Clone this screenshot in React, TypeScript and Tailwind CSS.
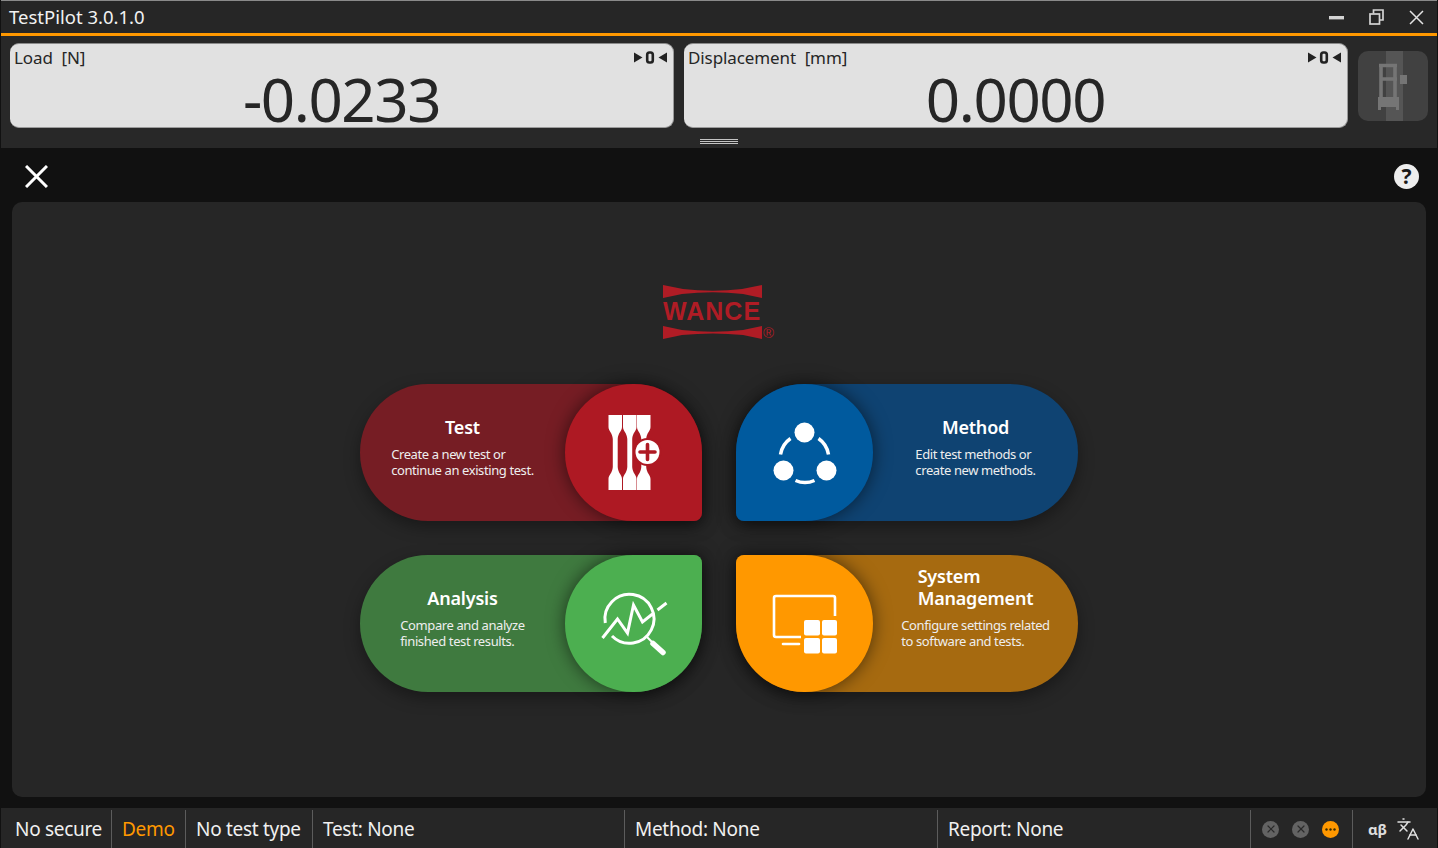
import type { ReactNode } from 'react';
import { Languages, X } from 'lucide-react';

const ZeroMark = () => (
  <svg width="33" height="13" viewBox="0 0 33 13">
    <path d="M0 1.5 L8.5 6.5 L0 11.5 Z" fill="#222" />
    <rect x="13.2" y="1.5" width="5.6" height="10" rx="2.2" fill="none" stroke="#222" strokeWidth="2.6" />
    <path d="M33 1.5 L24.5 6.5 L33 11.5 Z" fill="#222" />
  </svg>
);

const Gauge = ({ label, value }: { label: string; value: string }) => (
  <div className="flex-1 h-[85px] rounded-[9px] bg-[#e1e1e1] border border-[#9a9a9a] border-l-0 border-t-[#8a8a8a] pl-[4px] text-[#262626]">
    <div className="flex items-start justify-between pr-[6px] pt-[2px]">
      <span className="text-[17px] leading-[24px] tracking-[-0.1px] whitespace-pre">{label}</span>
      <span className="pt-[5px]">
        <ZeroMark />
      </span>
    </div>
    <div className="text-center text-[60px] leading-[60px] tracking-[-1.4px] mt-[-1px] pr-[4px]">{value}</div>
  </div>
);

const MachineIcon = () => (
  <div className="w-[70px] h-[70px] rounded-[10px] bg-[#414141] overflow-hidden">
    <svg width="70" height="70" viewBox="0 0 70 70">
      <rect x="28" y="0" width="17" height="70" fill="#555" />
      <path d="M23 13 V46 M37 13 V46 M21 14.5 H39 M22 28 H39" stroke="#757575" strokeWidth="3.6" fill="none" />
      <rect x="20" y="46" width="21" height="10" fill="#757575" />
      <rect x="20" y="56" width="3" height="3" fill="#757575" />
      <rect x="38" y="56" width="3" height="3" fill="#757575" />
      <rect x="42" y="24" width="7" height="9" fill="#757575" />
    </svg>
  </div>
);

const Bone = ({ x }: { x: number }) => (
  <path
    transform={`translate(${x} 0)`}
    d="M0 0 H13.5 V12 C13.5 16 9.5 18 9.2 24 V52 C9.5 58 13.5 60 13.5 64 V75 H0 V64 C0 60 4 58 4.3 52 V24 C4 18 0 16 0 12 Z"
    fill="#fff"
  />
);

const TestIcon = () => (
  <svg width="56" height="76" viewBox="0 0 56 76">
    <Bone x={2.5} />
    <Bone x={17} />
    <Bone x={31} />
    <circle cx="41.5" cy="37" r="14" fill="#ae1923" />
    <circle cx="41.5" cy="37" r="12" fill="#fff" />
    <path d="M41.5 29.5 V44.5 M34 37 H49" stroke="#ae1923" strokeWidth="3.6" strokeLinecap="round" />
  </svg>
);

const MethodIcon = () => (
  <svg width="66" height="66" viewBox="0 0 66 66" fill="none" className="overflow-visible">
    <circle cx="32.5" cy="12.5" r="10" fill="#fff" />
    <circle cx="11.5" cy="50.5" r="10" fill="#fff" />
    <circle cx="54.5" cy="50.5" r="10" fill="#fff" />
    <path d="M8.5 34.5 A24 24 0 0 1 18.5 18.5" stroke="#fff" strokeWidth="3.5" />
    <path d="M46.5 18.5 A24 24 0 0 1 56.5 34.5" stroke="#fff" strokeWidth="3.5" />
    <path d="M23.5 60.5 A24 24 0 0 0 42.5 60.5" stroke="#fff" strokeWidth="3.5" />
  </svg>
);

const AnalysisIcon = () => (
  <svg width="68" height="64" viewBox="0 0 68 64" fill="none" stroke="#fff" className="overflow-visible">
    <path d="M5.3 31 A24.5 24.5 0 1 1 12 44" strokeWidth="3" />
    <path d="M2.5 46 L17.5 27 L27.5 41 L33.5 13 L42.5 30 L52.5 22" strokeWidth="3" />
    <path d="M57.5 18 L66.5 11" strokeWidth="3" />
    <path d="M47 45 L52 50" strokeWidth="2" />
    <path d="M53 51.5 L63 60.5" strokeWidth="5.5" strokeLinecap="round" />
  </svg>
);

const SystemIcon = () => (
  <svg width="66" height="60" viewBox="0 0 66 60" fill="none">
    <path d="M63 22 V4 Q63 2 61 2 H4 Q2 2 2 4 V41 Q2 43 4 43 H29" stroke="#fff" strokeWidth="2.6" />
    <path d="M11 50 H27" stroke="#fff" strokeWidth="2.6" strokeLinecap="round" />
    <rect x="32" y="26" width="16" height="15.5" rx="2" fill="#fff" />
    <rect x="50" y="26" width="15" height="15.5" rx="2" fill="#fff" />
    <rect x="32" y="44" width="16" height="15.5" rx="2" fill="#fff" />
    <rect x="50" y="44" width="15" height="15.5" rx="2" fill="#fff" />
  </svg>
);

type CardProps = {
  title: ReactNode;
  lines: string[];
  outer: string;
  circle: string;
  icon: ReactNode;
};

const Card = ({ title, lines, outer, circle, icon }: CardProps) => (
  <div className={`flex items-stretch h-[137px] w-[342px] shadow-[0_6px_16px_rgba(0,0,0,0.35)] ${outer}`}>
    <div className="flex-1 flex flex-col items-center justify-end pb-[43px]">
      <div className="text-white">
        <div className="flex justify-center text-[18px] leading-[22px] font-semibold tracking-[-0.2px]">
          <div>{title}</div>
        </div>
        <div className="mt-[9px] text-[13px] leading-[15.5px] text-[#eeeeee] tracking-[-0.4px]">
          {lines.map((line) => (
            <div key={line}>{line}</div>
          ))}
        </div>
      </div>
    </div>
    <div className={`w-[137px] flex items-center justify-center shadow-[0_0_18px_rgba(0,0,0,0.55)] ${circle}`}>{icon}</div>
  </div>
);

const Logo = () => (
  <div className="relative w-[99px] flex flex-col mt-[83px] mr-[13px]">
    <svg width="99" height="13" viewBox="0 0 99 13" className="block">
      <path d="M0 0 L20 4 Q50 7.5 79 4 L99 0 V13 L80 9 Q50 5.5 19 9 L0 13 Z" fill="#b01c25" />
    </svg>
    <div className="text-[#b01c25] font-['Liberation_Sans',sans-serif] font-bold text-[25px] leading-[26px] mb-[2px] tracking-[1px] whitespace-nowrap">WANCE</div>
    <svg width="99" height="13" viewBox="0 0 99 13" className="block">
      <path d="M0 0 L19 4 Q50 7.5 80 4 L99 0 V13 L80 9 Q50 6 19 9 L0 13 Z" fill="#b01c25" />
    </svg>
    <span className="absolute left-[100px] top-[40px] font-['Liberation_Sans',sans-serif] text-[15px] leading-[15px] text-[#b01c25]">®</span>
  </div>
);

const StatusCell = ({ width, children, className }: { width: string; children: ReactNode; className?: string }) => (
  <div className={`${width} h-[38px] mt-[2px] shrink-0 flex items-center pl-[10px] border-r border-[#5c5c5c] ${className ?? ''}`}>{children}</div>
);

const StatusDot = () => (
  <span className="w-[17px] h-[17px] rounded-full bg-[#636363] flex items-center justify-center">
    <X size={12} strokeWidth={2.4} color="#2a2a2a" />
  </span>
);

export default function App() {
  return (
    <div className="h-[848px] w-full overflow-hidden flex flex-col bg-[#111111] font-['Noto_Sans',sans-serif] text-white border-x border-[#111111]">
      <header className="h-[33px] bg-[#262626] border-t border-[#8a8a8a] flex items-center justify-between pl-[8px] pr-[13px]">
        <span className="text-[18.5px] leading-[32px] text-[#f2f2f2]">TestPilot 3.0.1.0</span>
        <div className="flex items-center gap-[25px]">
          <svg width="15" height="15" viewBox="0 0 15 15">
            <rect x="0" y="6" width="15" height="3.4" fill="#d4d4d4" />
          </svg>
          <svg width="15" height="16" viewBox="0 0 15 16" fill="none" stroke="#d4d4d4" strokeWidth="1.7">
            <rect x="1" y="5" width="9.5" height="10" />
            <path d="M4.5 4.5 V1 H14 V11 H11" />
          </svg>
          <svg width="15" height="15" viewBox="0 0 15 15" fill="none" stroke="#e4e4e4" strokeWidth="1.5">
            <path d="M1 1 L14 14 M14 1 L1 14" />
          </svg>
        </div>
      </header>
      <div className="h-[3px] bg-[#ff9800]" />

      <section className="h-[112px] bg-[#282828] relative px-[9px] pt-[7px] flex items-start gap-[10px]">
        <Gauge label="Load  [N]" value="-0.0233" />
        <Gauge label="Displacement  [mm]" value="0.0000" />
        <div className="pt-[8px]">
          <MachineIcon />
        </div>
        <div className="absolute left-[699px] bottom-[4px] w-[38px] flex flex-col gap-[1px]">
          <div className="h-[1px] bg-[#c4c4c4]" />
          <div className="h-[1px] bg-[#c4c4c4]" />
          <div className="h-[1px] bg-[#c4c4c4]" />
        </div>
      </section>

      <main className="flex-1 min-h-0 flex flex-col">
        <div className="h-[54px] pt-[3px] flex items-center justify-between pl-[24px] pr-[18px]">
          <svg width="23" height="23" viewBox="0 0 23 23" fill="none" stroke="#fff" strokeWidth="3">
            <path d="M1 1 L22 22 M22 1 L1 22" />
          </svg>
          <span className="w-[25px] h-[25px] rounded-full bg-[#eeeeee] text-[#1a1a1a] text-[21px] leading-[25px] font-bold text-center">?</span>
        </div>
        <div className="mx-[11px] h-[595px] rounded-[10px] bg-[#262626] flex flex-col items-center">
          <Logo />
          <div className="grid grid-cols-2 gap-x-[34px] gap-y-[34px] mt-[45px]">
            <Card
              title="Test"
              lines={['Create a new test or', 'continue an existing test.']}
              outer="rounded-l-[68px] rounded-tr-[68px] rounded-br-[8px] bg-[#761d24]"
              circle="rounded-l-[68px] rounded-tr-[68px] rounded-br-[8px] bg-[#ae1923]"
              icon={<TestIcon />}
            />
            <Card
              title="Method"
              lines={['Edit test methods or', 'create new methods.']}
              outer="flex-row-reverse rounded-r-[68px] rounded-tl-[68px] rounded-bl-[8px] bg-[#0f4372]"
              circle="rounded-r-[68px] rounded-tl-[68px] rounded-bl-[8px] bg-[#005a9e]"
              icon={<MethodIcon />}
            />
            <Card
              title="Analysis"
              lines={['Compare and analyze', 'finished test results.']}
              outer="rounded-l-[68px] rounded-br-[68px] rounded-tr-[8px] bg-[#3f7a3f]"
              circle="rounded-l-[68px] rounded-br-[68px] rounded-tr-[8px] bg-[#4caf50]"
              icon={<AnalysisIcon />}
            />
            <Card
              title={
                <>
                  System
                  <br />
                  Management
                </>
              }
              lines={['Configure settings related', 'to software and tests.']}
              outer="flex-row-reverse rounded-r-[68px] rounded-bl-[68px] rounded-tl-[8px] bg-[#a66a10]"
              circle="rounded-r-[68px] rounded-bl-[68px] rounded-tl-[8px] bg-[#ff9800]"
              icon={<SystemIcon />}
            />
          </div>
        </div>
        <div className="h-[11px]" />
      </main>

      <footer className="h-[40px] bg-[#262626] flex items-start text-[19px] leading-[38px] text-[#f0f0f0] tracking-[-0.3px]">
        <StatusCell width="w-[111px]" className="pl-[14px]">No secure</StatusCell>
        <StatusCell width="w-[74px]" className="text-[#ff9800]">Demo</StatusCell>
        <StatusCell width="w-[127px]">No test type</StatusCell>
        <StatusCell width="w-[312px]">Test: None</StatusCell>
        <StatusCell width="w-[313px]">Method: None</StatusCell>
        <StatusCell width="w-[313px]">Report: None</StatusCell>
        <StatusCell width="w-[102px]">
          <div className="flex items-center gap-[13px] pl-[1px]">
            <StatusDot />
            <StatusDot />
            <span className="w-[17px] h-[17px] rounded-full bg-[#ff9800] flex items-center justify-center">
              <svg width="11" height="3" viewBox="0 0 11 3" fill="#3a2a00">
                <circle cx="1.5" cy="1.5" r="1.2" />
                <circle cx="5.5" cy="1.5" r="1.2" />
                <circle cx="9.5" cy="1.5" r="1.2" />
              </svg>
            </span>
          </div>
        </StatusCell>
        <div className="flex-1 h-[38px] mt-[2px] flex items-center pl-[15px] gap-[9px]">
          <span className="text-[15px] font-bold leading-[20px] text-[#dddddd]">αβ</span>
          <Languages size={24} strokeWidth={1.5} color="#e0e0e0" />
        </div>
      </footer>
    </div>
  );
}
